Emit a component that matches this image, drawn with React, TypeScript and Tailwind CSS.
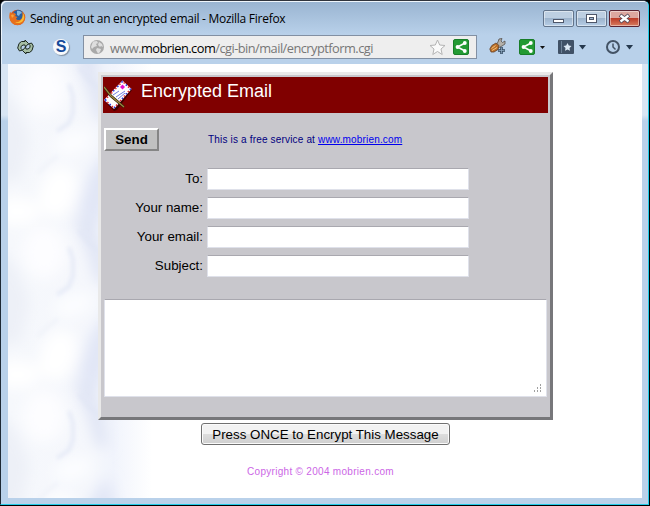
import React from "react";

function FirefoxIcon() {
  return (
    <svg width="17" height="17" viewBox="0 0 17 17" className="shrink-0">
      <circle cx="8.5" cy="8.5" r="7.8" fill="#d9561a" />
      <circle cx="9.2" cy="6.4" r="5.6" fill="#2a5f9e" />
      <path d="M8 2c2-.6 4 .3 5 2l-2 1-1 2-2-1z" fill="#7fb6e0" />
      <path d="M1 3l2 1.5L5.500 4 7 5.500 6 7l2.500 1L7 9.500c1 2 4 2 5.500.2C14 8 14 5 12.500 2.500 16 4.500 17 9 15 12.500c-2 3.500-7 4.500-10.500 2.500C.5 13-.5 7.500 1 3z" fill="#e8701c" />
      <path d="M14 4c1.600 3 1.600 6-.4 8.300C11.500 14.500 8 14.500 6 13c4 .7 8-1.500 8-9z" fill="#f9bf35" />
      <path d="M2 6l2-.5L5 7 3 9z" fill="#f7a23b" />
    </svg>
  );
}

function RefreshIcon() {
  return (
    <svg width="17" height="16" viewBox="0 0 17 16" className="shrink-0">
      <g fill="#a5bda4" stroke="#1c281f" strokeLinejoin="round">
        <path d="M2.500 12L.7 9 2 4.500 4.500 2.500H8V1l3.500 3.500L8.500 8 8 6H6L4 7.500v2L5.500 11z" />
        <path d="M14.500 4l1.800 3L15 11.500l-2.500 2H9V15l-3.500-3.500L8.500 8l.5 2h2l2-1.500v-2L11.500 5z" />
      </g>
    </svg>
  );
}

function GlobeIcon() {
  return (
    <svg width="14" height="14" viewBox="0 0 14 14" className="shrink-0">
      <circle cx="7" cy="7" r="7" fill="#a9a9a9" />
      <path d="M3 1.500L7 1l1 2-2 1 1 2-3 1-2 2-1-2zM9 2l3 2 1 3-2-1-1 1-2-2zM7 8l4 1-1 3-2 1.500L6 10z" fill="#dedede" />
    </svg>
  );
}

function ShareIcon() {
  return (
    <svg width="16" height="16" viewBox="0 0 16 16" className="shrink-0">
      <rect x=".5" y=".5" width="15" height="15" rx="1.500" fill="#239a33" stroke="#187d28" />
      <path d="M12 4L4.500 8 12 12" fill="none" stroke="#fff" strokeWidth="1.600" />
      <circle cx="11.800" cy="4" r="1.900" fill="#fff" />
      <circle cx="4.500" cy="8" r="1.900" fill="#fff" />
      <circle cx="11.800" cy="12" r="1.900" fill="#fff" />
    </svg>
  );
}

function ToolIcon() {
  return (
    <svg width="17" height="17" viewBox="0 0 17 17" className="shrink-0">
      <path d="M7 7l2-3 1-3 3-.5L12 3l1.500 1.500L16 3v3l-3 2-4 2z" fill="#b3b0aa" stroke="#55504b" strokeWidth=".8" />
      <path d="M.8 11l2-3.500L7 5l3 2.500-1 4L5 14H2z" fill="#b96e28" stroke="#64422a" strokeWidth=".8" />
      <path d="M2.500 10.500l4-3M3 12.500l5-3" stroke="#f3c27a" />
      <path d="M12.500 9v7M9 12.500h7" stroke="#33495f" strokeWidth="2.600" />
      <path d="M12.500 9.500v6M9.500 12.500h6" stroke="#8fa9c2" strokeWidth=".8" />
    </svg>
  );
}

function Arrow({ small = false }: { small?: boolean }) {
  return small ? (
    <svg width="5" height="3" viewBox="0 0 5 3" className="shrink-0"><path d="M0 0h5L2.500 3z" fill="#111" /></svg>
  ) : (
    <svg width="7" height="5" viewBox="0 0 7 5" className="shrink-0"><path d="M0 0h7L3.500 4.500z" fill="#25384d" /></svg>
  );
}

function EnvelopeIcon() {
  return (
    <svg width="28" height="32" viewBox="0 0 28 32" className="shrink-0">
      <path d="M2 24L20 4l8 7-15 20-3 1z" fill="#170000" opacity=".6" />
      <path d="M1 21L18.500 2.500l8 7.500L10 29z" fill="#fff" stroke="#fff" strokeWidth="1.500" />
      <path d="M1 21L18.500 2.500l8 7.500L10 29z" fill="none" stroke="#2432df" strokeWidth="1.500" strokeDasharray="1.500 4.500" />
      <path d="M1 21L18.500 2.500l8 7.500L10 29z" fill="none" stroke="#e02636" strokeWidth="1.500" strokeDasharray="1.500 4.500" strokeDashoffset="3" />
      <path d="M16 8l2.500-2.500L21 8l-2.500 2.500z" fill="#e411d0" />
      <path d="M9 16l6-4M12 18l9-6M14 20l7-6" stroke="#7080e4" />
      <path d="M0 8l7 9 13 11" fill="none" stroke="#2c240a" strokeWidth="2.600" />
      <path d="M0 8l7 9 13 11" fill="none" stroke="#9c8540" strokeWidth="1.300" />
    </svg>
  );
}

function Marble() {
  return (
    <svg className="absolute left-0 top-0" width="170" height="434">
      <defs>
        <filter id="soft" filterUnits="userSpaceOnUse" x="-30" y="-190" width="240" height="540"><feGaussianBlur stdDeviation="7" /></filter>
        <filter id="fine" filterUnits="userSpaceOnUse" x="-30" y="-190" width="240" height="540"><feGaussianBlur stdDeviation="2" /></filter>
        <linearGradient id="fade">
          <stop offset="0" stopColor="#f6f8fc" /><stop offset=".5" stopColor="#f5f7fc" />
          <stop offset=".62" stopColor="#f1f4fc" /><stop offset=".85" stopColor="#fff" />
        </linearGradient>
        <g id="clouds">
          <path d="M64-12L84-6l11 28 5 35-12-3-8-29z" fill="#dfe4f4" />
          <path d="M100 85L82 108l-12 38 19 20 19-50z" fill="#e1e6f6" />
          <path d="M-10 20l18 20 14 34-9 41-27 4z" fill="#edf0f7" />
          <ellipse cx="36" cy="25" rx="22" ry="26" fill="#fdfdff" />
          <ellipse cx="50" cy="128" rx="18" ry="26" fill="#fff" transform="rotate(18 50 128)" />
          <ellipse cx="65" cy="78" rx="20" ry="11" fill="#fcfdff" transform="rotate(-18 65 78)" />
          <ellipse cx="10" cy="147" rx="22" ry="14" fill="#fff" />
        </g>
        <g id="veins" fill="none" stroke="#e1e6f5" strokeWidth="3">
          <path d="M61 20l4 12v16l-4 11-12 8" />
          <path d="M50 92L40 99l-10 10" stroke="#eff2f9" />
          <path d="M71 3l10 13 12 10" />
        </g>
        <pattern id="marble" width="170" height="163.500" patternUnits="userSpaceOnUse">
          <rect width="170" height="163.500" fill="url(#fade)" />
          <g filter="url(#soft)">
            <use href="#clouds" y="-163.500" /><use href="#clouds" /><use href="#clouds" y="163.500" />
          </g>
          <g filter="url(#fine)">
            <use href="#veins" y="-163.500" /><use href="#veins" /><use href="#veins" y="163.500" />
          </g>
        </pattern>
      </defs>
      <rect width="170" height="434" fill="url(#marble)" />
    </svg>
  );
}

function WindowButton({ kind }: { kind: "min" | "max" | "close" }) {
  return (
    <div className={`flex h-[17px] w-[31px] items-center justify-center rounded-[2px] border shadow-[inset_0_0_0_1px_rgba(255,255,255,.45)] ${kind === "close" ? "border-[#5b2331] bg-[linear-gradient(#dda79f_0_45%,#bd3d29_50%,#d77d61)]" : "border-[#62748b] bg-[linear-gradient(#bdcfe2_0_45%,#9db4cd_50%,#b7cee6)]"}`}>
      <svg width="13" height="13" viewBox="0 0 13 13">
        {kind === "min" && <rect x="1.500" y="7.500" width="10" height="3" fill="#fff" stroke="#4e5669" />}
        {kind === "max" && <><rect x="1.500" y="2.500" width="10" height="8" fill="#fff" stroke="#4e5669" /><rect x="4.500" y="5.500" width="4" height="2" fill="#9fb8d2" stroke="#4e5669" /></>}
        {kind === "close" && <><path d="M2 3l9 7M11 3l-9 7" stroke="#4e4555" strokeWidth="4" /><path d="M2.500 3.500l8 6M10.500 3.500l-8 6" stroke="#fff" strokeWidth="2.300" /></>}
      </svg>
    </div>
  );
}

function Field({ label }: { label: string }) {
  return (
    <label className="flex h-[22px] items-center">
      <span className="w-[100px] whitespace-nowrap text-right text-[13.333px] leading-[20px]">{label}</span>
      <input className="ml-[4px] h-[22px] w-[262px] rounded-[1px] border border-[#dfe1ea] border-t-[#a9a8af] bg-white outline-none" />
    </label>
  );
}

export default function App() {
  return (
    <div className="h-[506px] w-[650px] overflow-hidden bg-black font-['Liberation_Sans',Arial,sans-serif] text-black">
      <div className="flex h-[505px] w-[649px] flex-col rounded-t-[6px] border border-[#22cce9] border-l-[#1e2935] border-t-[#30343d] bg-[#b9d1ea] shadow-[inset_1px_1px_0_#e6f0fa]">
        <header className="flex h-[34px] shrink-0 items-start rounded-t-[5px] bg-[linear-gradient(#99b4d1,#b9d1ea)] pl-[8px] pr-[8px] shadow-[inset_1px_1px_0_#eff6fc]">
          <div className="mt-[8px]"><FirefoxIcon /></div>
          <h1 className="ml-[4px] mt-[9px] whitespace-nowrap font-['Open_Sans',sans-serif] text-[12px] leading-[17px] tracking-[-0.27px]">Sending out an encrypted email - Mozilla Firefox</h1>
          <div className="ml-auto mt-[9px] flex gap-[2px]"><WindowButton kind="min" /><WindowButton kind="max" /><WindowButton kind="close" /></div>
        </header>
        <nav className="flex h-[29px] shrink-0 items-start pl-[16px] pt-0">
          <div className="mt-[4px]"><RefreshIcon /></div>
          <div className="ml-[19px] mt-[4px] flex h-[16px] w-[16px] items-center justify-center rounded-full bg-[#f8fafc] text-[16px] font-bold leading-none text-[#164b9a] shadow-[1px_1px_1px_#8291a2]">S</div>
          <div className="ml-[14px] flex h-[24px] w-[394px] items-center border border-[#8290a3] bg-[#eee] pl-[6px]">
            <GlobeIcon />
            <div className="ml-[6px] mt-px whitespace-nowrap font-['Open_Sans',sans-serif] text-[12.8px] leading-[20px] tracking-[-0.52px] text-[#777]">www.<span className="text-black">mobrien.com</span>/cgi-bin/mail/encryptform.cgi</div>
            <div className="ml-auto mr-[7px] flex items-center gap-[7px]">
              <svg width="17" height="17" viewBox="0 0 17 17"><path d="M8.500 1l2.200 5 5.300.5-4 3.500 1.200 5.500-4.700-3-4.700 3L5 10 1 6.500 6.300 6z" fill="#fafafa" stroke="#b4b4b4" /></svg>
              <ShareIcon />
            </div>
          </div>
          <div className="ml-[12px] mt-[3px]"><ToolIcon /></div>
          <div className="ml-[13px] mt-[4px] flex items-center gap-[5px]"><ShareIcon /><Arrow small /></div>
          <div className="ml-[13px] mt-[5px] flex items-center gap-[5px]">
            <svg width="16" height="14" viewBox="0 0 16 14"><rect width="16" height="14" rx="1" fill="#405166" /><path d="M3.500 1v12" stroke="#6d8197" /><path d="M9.500 3l1.300 2.500 2.700.4-2 2 .5 2.800-2.500-1.300L7 10.700l.5-2.800-2-2 2.700-.4z" fill="#dce8f4" /></svg><Arrow />
          </div>
          <div className="ml-[20px] mt-[5px] flex items-center gap-[6px]">
            <svg width="14" height="14" viewBox="0 0 14 14"><circle cx="7" cy="7" r="6" fill="none" stroke="#435365" strokeWidth="2" /><path d="M7 3.500V7l2.500 2.500" fill="none" stroke="#435365" strokeWidth="1.500" /></svg><Arrow />
          </div>
        </nav>
        <div className="flex h-[440px] w-full bg-[linear-gradient(#d8e5f3_0_51px,#b9d1ea_57px)] pl-[7px] pr-[6px]">
          <main className="relative h-[434px] w-[634px] overflow-hidden bg-white">
            <Marble />
            <div className="relative flex flex-col items-start pl-[90px] pt-[8px]">
              <section className="flex h-[348px] w-[455px] flex-col border-[3px] border-b-[#77777a] border-l-[#e9e9e9] border-r-[#77777a] border-t-[#e9e9e9] bg-[#c8c7cc] px-[2px] pt-[2px]">
                <div className="flex h-[36px] w-[445px] shrink-0 bg-[#800000] pl-[1px] pt-[2px]">
                  <EnvelopeIcon />
                  <h2 className="ml-[9px] mt-[1px] whitespace-nowrap text-[18px] leading-[22px] text-white">Encrypted Email</h2>
                </div>
                <div className="ml-[1px] mt-[15px] flex h-[23px] shrink-0">
                  <button className="h-[23px] w-[55px] border-2 border-b-[#858585] border-l-white border-r-[#858585] border-t-white bg-[#c0c0c0] text-[13.333px] font-bold leading-[18px]">Send</button>
                  <p className="ml-[49px] mt-[5px] whitespace-nowrap text-[10px] leading-[14px] tracking-[0.17px] text-[#000080]">This is a free service at <a className="text-[#0000ee] underline">www.mobrien.com</a></p>
                </div>
                <div className="mt-[17px] flex shrink-0 flex-col gap-[7px]">
                  <Field label="To:" />
                  <Field label="Your name:" />
                  <Field label="Your email:" />
                  <Field label="Subject:" />
                </div>
                <div className="ml-[1px] mt-[22px] flex h-[98px] w-[443px] shrink-0 items-end justify-end rounded-[1px] border border-[#dfe1ea] border-t-[#a9a8af] bg-white">
                  <svg width="9" height="9" viewBox="0 0 9 9" className="mb-[4px] mr-[4px]"><path d="M7 1h1v2H7zM4 4h1v2H4zM7 4h1v2H7zM1 7h1v2H1zM4 7h1v2H4zM7 7h1v2H7z" fill="#a0a0a0" /></svg>
                </div>
              </section>
              <button className="ml-[103px] mt-[3px] h-[22px] w-[249px] whitespace-nowrap rounded-[3px] border border-[#707070] bg-[linear-gradient(#f2f2f2_0_48%,#dddddd_52%,#cfcfcf)] pt-px text-[13.333px] leading-[19px] shadow-[inset_0_0_0_1px_#fbfbfb]">Press ONCE to Encrypt This Message</button>
              <p className="ml-[149px] mt-[20px] whitespace-nowrap text-[10px] leading-[14px] tracking-[0.3px] text-[#cc66e6]">Copyright © 2004 mobrien.com</p>
            </div>
          </main>
        </div>
      </div>
    </div>
  );
}
